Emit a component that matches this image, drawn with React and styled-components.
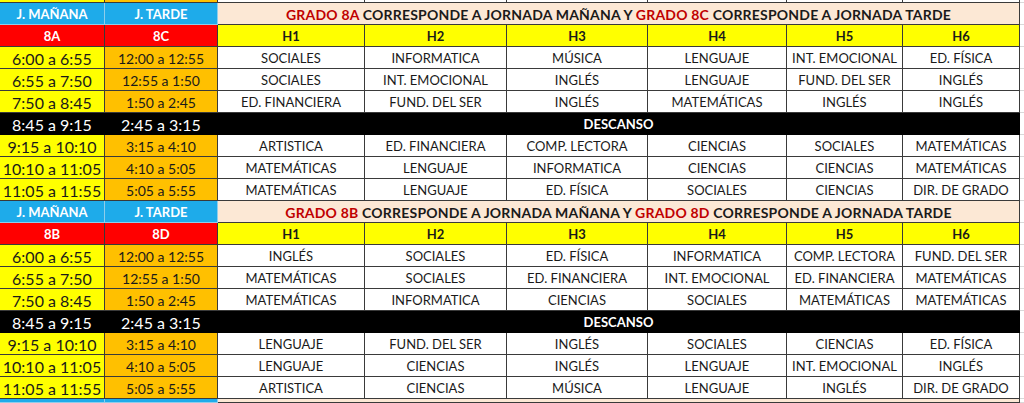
import React from "react";
import styled, { createGlobalStyle } from "styled-components";

const GlobalStyle = createGlobalStyle`
  html, body {
    margin: 0;
    padding: 0;
    background: #ffffff;
    overflow: hidden;
  }
  body {
    font-family: Lato, "Liberation Sans", Arial, sans-serif;
    color: #1a1a1a;
  }
`;

const COLS = "105px 113px 147px 142px 141px 139px 116px 117px";

const Sheet = styled.div`
  width: 1024px;
  display: flex;
  flex-direction: column;
`;

const Row = styled.div`
  display: grid;
  grid-template-columns: ${COLS} 4px;
  height: ${(p) => p.$h || 22}px;
  overflow: hidden;
`;

const Cell = styled.div`
  grid-column: span ${(p) => p.$span || 1};
  box-sizing: border-box;
  display: flex;
  align-items: center;
  justify-content: center;
  white-space: nowrap;
  background: ${(p) => p.$bg || "#ffffff"};
  color: ${(p) => p.$color || "#1a1a1a"};
  font-size: ${(p) => p.$size || 13}px;
  font-weight: ${(p) => (p.$bold ? 700 : 400)};
  border-right: 1px solid ${(p) => p.$line || "#3a3a3a"};
  border-bottom: 1px solid ${(p) => p.$line || "#3a3a3a"};
  padding-top: 1px;
`;

const Edge = styled.div`
  background: #ffffff;
  border-bottom: 1px solid #d9d9d9;
`;

const Title = styled.span`
  font-weight: 700;
  font-size: 14px;
  letter-spacing: 0.2px;
  color: #1a1a1a;
`;

const Red = styled.span`
  color: #c00000;
`;

const BLUE = "#1eabea";
const RED = "#ff0000";
const YELLOW = "#ffff00";
const ORANGE = "#ffc000";
const CREAM = "#fce8d5";

const blocks = [
  {
    a: "8A",
    b: "8C",
    rows: [
      ["SOCIALES", "INFORMATICA", "MÚSICA", "LENGUAJE", "INT. EMOCIONAL", "ED. FÍSICA"],
      ["SOCIALES", "INT. EMOCIONAL", "INGLÉS", "LENGUAJE", "FUND. DEL SER", "INGLÉS"],
      ["ED. FINANCIERA", "FUND. DEL SER", "INGLÉS", "MATEMÁTICAS", "INGLÉS", "INGLÉS"],
      null,
      ["ARTISTICA", "ED. FINANCIERA", "COMP. LECTORA", "CIENCIAS", "SOCIALES", "MATEMÁTICAS"],
      ["MATEMÁTICAS", "LENGUAJE", "INFORMATICA", "CIENCIAS", "CIENCIAS", "MATEMÁTICAS"],
      ["MATEMÁTICAS", "LENGUAJE", "ED. FÍSICA", "SOCIALES", "CIENCIAS", "DIR. DE GRADO"],
    ],
  },
  {
    a: "8B",
    b: "8D",
    rows: [
      ["INGLÉS", "SOCIALES", "ED. FÍSICA", "INFORMATICA", "COMP. LECTORA", "FUND. DEL SER"],
      ["MATEMÁTICAS", "SOCIALES", "ED. FINANCIERA", "INT. EMOCIONAL", "ED. FINANCIERA", "MATEMÁTICAS"],
      ["MATEMÁTICAS", "INFORMATICA", "CIENCIAS", "SOCIALES", "MATEMÁTICAS", "MATEMÁTICAS"],
      null,
      ["LENGUAJE", "FUND. DEL SER", "INGLÉS", "SOCIALES", "CIENCIAS", "ED. FÍSICA"],
      ["LENGUAJE", "CIENCIAS", "INGLÉS", "LENGUAJE", "INT. EMOCIONAL", "INGLÉS"],
      ["ARTISTICA", "CIENCIAS", "MÚSICA", "LENGUAJE", "INGLÉS", "DIR. DE GRADO"],
    ],
  },
];

const times = [
  ["6:00 a 6:55", "12:00 a 12:55"],
  ["6:55 a 7:50", "12:55 a 1:50"],
  ["7:50 a 8:45", "1:50 a 2:45"],
  ["8:45 a 9:15", "2:45 a 3:15"],
  ["9:15 a 10:10", "3:15 a 4:10"],
  ["10:10 a 11:05", "4:10 a 5:05"],
  ["11:05 a 11:55", "5:05 a 5:55"],
];

function Block({ a, b, rows }) {
  return (
    <>
      <Row>
        <Cell $bg={BLUE} $color="#ffffff" $bold $line="#8fcdea">J. MAÑANA</Cell>
        <Cell $bg={BLUE} $color="#ffffff" $bold $line="#8fcdea">J. TARDE</Cell>
        <Cell $bg={CREAM} $span={6}>
          <Title>
            <Red>GRADO {a}</Red> CORRESPONDE A JORNADA MAÑANA Y <Red>GRADO {b}</Red>{" "}
            CORRESPONDE A JORNADA TARDE
          </Title>
        </Cell>
        <Edge />
      </Row>
      <Row>
        <Cell $bg={RED} $color="#ffffff" $bold>{a}</Cell>
        <Cell $bg={RED} $color="#ffffff" $bold>{b}</Cell>
        {["H1", "H2", "H3", "H4", "H5", "H6"].map((h) => (
          <Cell key={h} $bg={YELLOW} $bold>{h}</Cell>
        ))}
        <Edge />
      </Row>
      {rows.map((r, i) =>
        r === null ? (
          <Row key={i}>
            <Cell $bg="#000000" $color="#ffffff" $size={16} $line="#000000">{times[i][0]}</Cell>
            <Cell $bg="#000000" $color="#ffffff" $size={16} $line="#000000">{times[i][1]}</Cell>
            <Cell $bg="#000000" $color="#ffffff" $bold $span={6} $line="#000000">DESCANSO</Cell>
            <Edge />
          </Row>
        ) : (
          <Row key={i}>
            <Cell $bg={YELLOW} $size={16}>{times[i][0]}</Cell>
            <Cell $bg={ORANGE} $size={14}>{times[i][1]}</Cell>
            {r.map((s, j) => (
              <Cell key={j}>{s}</Cell>
            ))}
            <Edge />
          </Row>
        )
      )}
    </>
  );
}

export default function App() {
  return (
    <>
      <GlobalStyle />
      <Sheet>
        <Row $h={3}>
          <Cell $bg={YELLOW} />
          <Cell $bg={ORANGE} />
          {[0, 1, 2, 3, 4, 5].map((k) => (
            <Cell key={k} />
          ))}
          <Edge />
        </Row>
        {blocks.map((b) => (
          <Block key={b.a} {...b} />
        ))}
        <Row $h={4}>
          <Cell $bg={BLUE} $line="#8fcdea" />
          <Cell $bg={BLUE} $line="#8fcdea" />
          <Cell $bg={CREAM} $span={6} />
          <Edge />
        </Row>
      </Sheet>
    </>
  );
}
